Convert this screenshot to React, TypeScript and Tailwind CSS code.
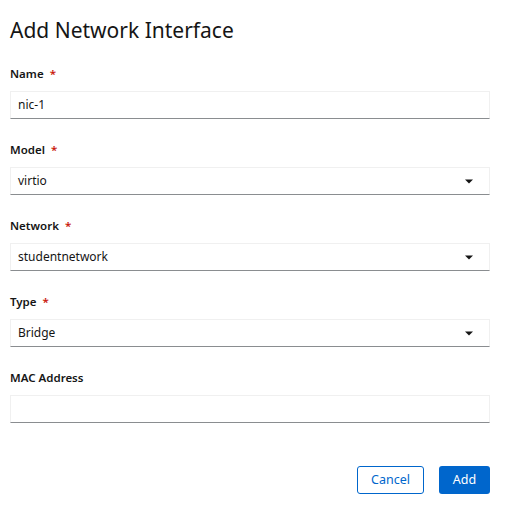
const Caret = () => (
  <svg width="8" height="5" viewBox="0 0 8 5" className="shrink-0">
    <path d="M0 0.5h8L4 4.5z" fill="#151515" />
  </svg>
);

const Field = ({ label, required, value, select }: { label: string; required?: boolean; value?: string; select?: boolean }) => (
  <div className="flex flex-col">
    <div className="h-[18px] flex items-center text-[11.5px] font-semibold text-[#151515] leading-[18px]">
      {label}
      {required && <span className="ml-[6px] text-[#c9190b]">*</span>}
    </div>
    <div className="mt-[8px] h-[28px] flex items-center justify-between pl-[7px] pr-[16px] border border-[#f0f0f0] border-b-[#8a8d90] text-[12px] text-[#151515]">
      <span>{value}</span>
      {select && <Caret />}
    </div>
  </div>
);

export default function App() {
  return (
    <div className="w-[507px] h-[510px] bg-white pl-[10px] pr-[17px] font-['Noto_Sans',sans-serif]">
      <h1 className="pt-[14px] leading-[32px] text-[21px] text-[#151515]">Add Network Interface</h1>
      <form className="mt-[19px] flex flex-col gap-[22px]">
        <Field label="Name" required value="nic-1" />
        <Field label="Model" required value="virtio" select />
        <Field label="Network" required value="studentnetwork" select />
        <Field label="Type" required value="Bridge" select />
        <Field label="MAC Address" />
      </form>
      <div className="mt-[43px] flex justify-end gap-[15px]">
        <button className="h-[28px] w-[67px] rounded-[3px] border border-[#0066cc] text-[#0066cc] text-[12.5px]">Cancel</button>
        <button className="h-[28px] w-[51px] rounded-[3px] bg-[#0066cc] text-white text-[12.5px]">Add</button>
      </div>
    </div>
  );
}
